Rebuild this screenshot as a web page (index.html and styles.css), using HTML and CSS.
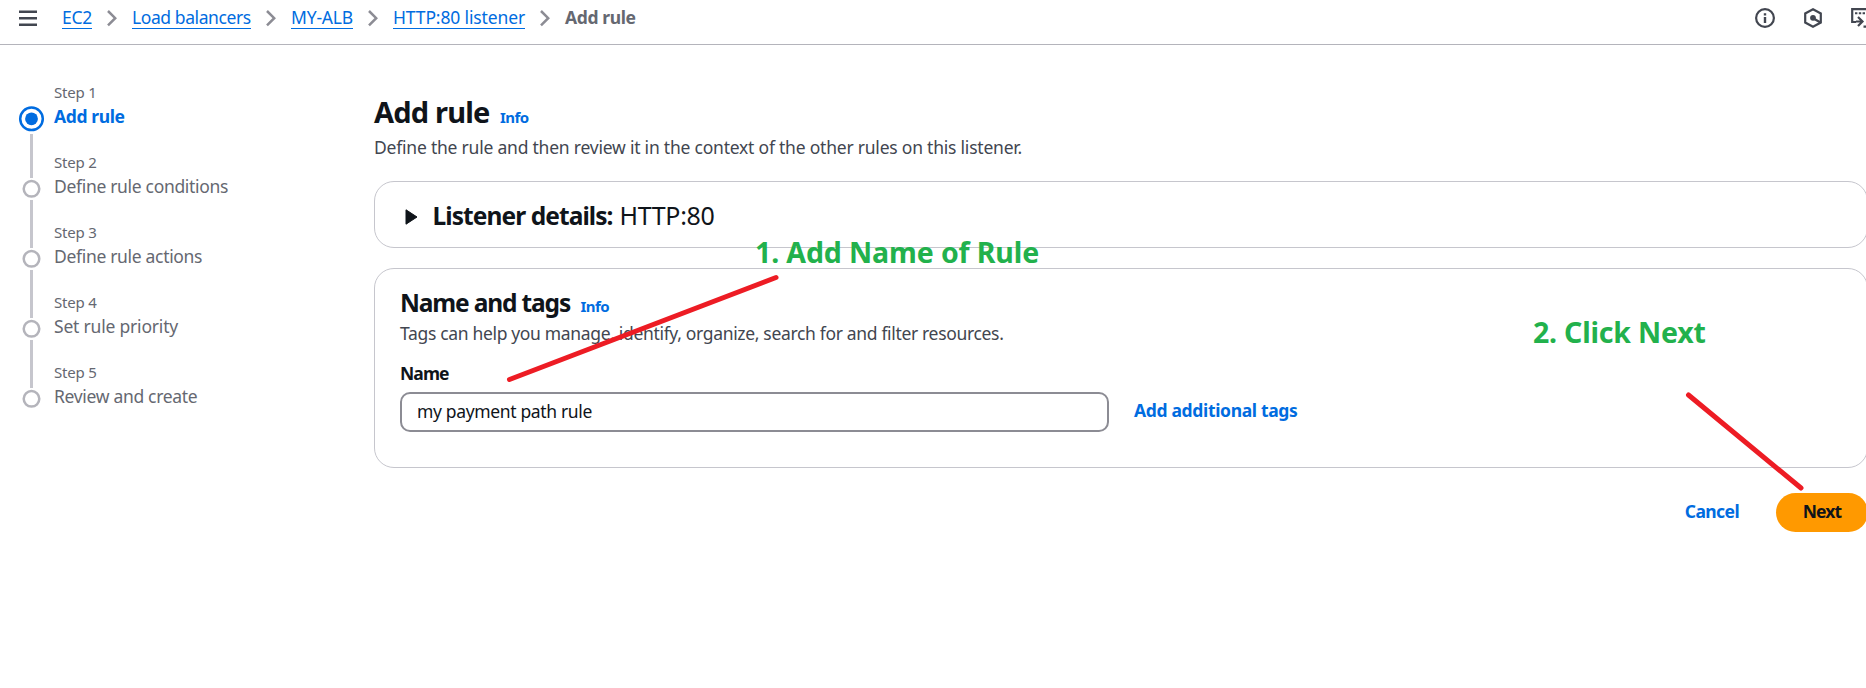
FILE: index.html
```
<!DOCTYPE html>
<html lang="en">
<head>
<meta charset="utf-8">
<title>Add rule</title>
<link rel="stylesheet" href="styles.css">
</head>
<body>
<header class="topbar">
  <svg class="menu-icon" width="18" height="17" viewBox="0 0 18 17"><path d="M0 1.7h18M0 8.2h18M0 14.7h18"/></svg>
  <nav class="crumbs">
    <a class="crumb crumb-ec2">EC2</a>
    <svg class="sep" width="10" height="17" viewBox="0 0 10 17"><path d="M1 1l7.2 7.2L1 15.4"/></svg>
    <a class="crumb crumb-lb">Load balancers</a>
    <svg class="sep" width="10" height="17" viewBox="0 0 10 17"><path d="M1 1l7.2 7.2L1 15.4"/></svg>
    <a class="crumb crumb-alb">MY-ALB</a>
    <svg class="sep" width="10" height="17" viewBox="0 0 10 17"><path d="M1 1l7.2 7.2L1 15.4"/></svg>
    <a class="crumb crumb-listener">HTTP:80 listener</a>
    <svg class="sep" width="10" height="17" viewBox="0 0 10 17"><path d="M1 1l7.2 7.2L1 15.4"/></svg>
    <span class="crumb-current">Add rule</span>
  </nav>
  <div class="tools">
    <svg width="20" height="20" viewBox="0 0 20 20"><circle cx="10" cy="10" r="8.9" class="stroke"/><path class="solid" d="M8.8 5.2h2.4v2.2H8.8zM8.8 9h2.4v6H8.8z"/></svg>
    <svg width="18" height="20" viewBox="0 0 18 20"><path class="stroke" d="M9 1.2l7.8 4.3v9L9 18.8l-7.8-4.3v-9z"/><circle class="solid" cx="9" cy="9.8" r="2.9"/><path class="stroke" d="M9.5 10.5l7 4"/></svg>
    <svg width="20" height="20" viewBox="0 0 20 20"><path class="stroke" d="M5 14H1.2V1.2H20"/><path class="dots" d="M4 5.2h2.4M7.8 5.2h2.4M11.6 5.2H14"/><path class="stroke" d="M5 13.5h6M7 9l4.5 4.5L7 18M12.5 18.7H20"/></svg>
  </div>
</header>

<div class="page">
  <ol class="steps">
    <li class="step active">
      <svg class="marker" width="26" height="70" viewBox="0 0 26 70"><circle class="ring" cx="12.5" cy="36.8" r="11.3"/><circle class="dot" cx="12.5" cy="36.8" r="6.4"/><path d="M12.5 52v44"/></svg>
      <div><div class="num">Step 1</div><div class="label">Add rule</div></div>
    </li>
    <li class="step">
      <svg class="marker" width="26" height="70" viewBox="0 0 26 70"><circle class="ring" cx="12.5" cy="36.8" r="7.8"/><path d="M12.5 48v48"/></svg>
      <div><div class="num">Step 2</div><div class="label">Define rule conditions</div></div>
    </li>
    <li class="step">
      <svg class="marker" width="26" height="70" viewBox="0 0 26 70"><circle class="ring" cx="12.5" cy="36.8" r="7.8"/><path d="M12.5 48v48"/></svg>
      <div><div class="num">Step 3</div><div class="label">Define rule actions</div></div>
    </li>
    <li class="step">
      <svg class="marker" width="26" height="70" viewBox="0 0 26 70"><circle class="ring" cx="12.5" cy="36.8" r="7.8"/><path d="M12.5 48v48"/></svg>
      <div><div class="num">Step 4</div><div class="label priority">Set rule priority</div></div>
    </li>
    <li class="step">
      <svg class="marker" width="26" height="70" viewBox="0 0 26 70"><circle class="ring" cx="12.5" cy="36.8" r="7.8"/></svg>
      <div><div class="num">Step 5</div><div class="label">Review and create</div></div>
    </li>
  </ol>

  <main class="content">
    <div class="title-row"><h1>Add rule</h1><a class="info">Info</a></div>
    <p class="lead">Define the rule and then review it in the context of the other rules on this listener.</p>

    <section class="card details">
      <svg class="caret" width="13" height="16" viewBox="0 0 13 16"><path d="M1 .8v14.4L12 8z"/></svg>
      <h2>Listener details:</h2><span class="protocol">HTTP:80</span>
    </section>

    <section class="card tags">
      <div class="title-row"><h2 class="tags-title">Name and tags</h2><a class="info">Info</a></div>
      <p class="hint">Tags can help you manage, identify, organize, search for and filter resources.</p>
      <label class="field-label" for="name">Name</label>
      <div class="field-row">
        <input id="name" class="field" type="text" value="my payment path rule">
        <a class="add-tags">Add additional tags</a>
      </div>
    </section>

    <div class="actions"><a class="cancel">Cancel</a><button class="next">Next</button></div>
  </main>
</div>

<svg class="pointers" width="1866" height="688" viewBox="0 0 1866 688"><path d="M509.5 379.5L776 277.5M1688.5 395L1801 488"/></svg>
<div class="note note-name">1. Add Name of Rule</div>
<div class="note note-next">2. Click Next</div>
</body>
</html>
```
FILE: styles.css
```
* { box-sizing: border-box; }
html, body { height: 100%; overflow: hidden; }
body {
  margin: 0;
  background: #fff;
  color: #0f141a;
  font: 17.5px/25px "Noto Sans", "Open Sans", sans-serif;
  letter-spacing: -0.32px;
}
h1, h2, p, ol { margin: 0; padding: 0; }
svg { display: block; flex: none; overflow: visible; fill: none; }

.topbar {
  display: flex;
  height: 45px;
  padding-left: 19px;
  border-bottom: 1px solid #b4b4bb;
  overflow: hidden;
}
.menu-icon { margin: 10px 25px 0 0; stroke: #424650; stroke-width: 2.4; }
.crumbs { display: flex; align-items: flex-start; padding-top: 5px; white-space: nowrap; }
.crumb { height: 24px; color: #006ce0; border-bottom: 1px solid #006ce0; }
.crumb-ec2 { width: 30px; }
.crumb-lb { width: 119px; letter-spacing: -0.41px; }
.crumb-alb { width: 62px; letter-spacing: -0.19px; }
.crumb-listener { width: 132px; letter-spacing: -0.13px; }
.sep { margin: 5px 15px 0; stroke: #8c8c94; stroke-width: 2.5; }
.crumb-current { color: #656871; font-weight: 700; letter-spacing: -0.39px; }
.tools { display: flex; gap: 29px; margin-left: auto; margin-right: -5px; padding-top: 8px; }
.stroke { stroke: #424650; stroke-width: 2.2; }
.solid { fill: #424650; }
.dots { stroke: #424650; stroke-width: 2; }

.page { display: flex; }
.steps { flex: none; width: 374px; padding: 37px 0 0 19px; list-style: none; }
.step { display: flex; gap: 9px; height: 70px; color: #656871; }
.marker { stroke: #c6c6cd; stroke-width: 3; }
.marker .ring { stroke: #b4b4bb; stroke-width: 2.5; }
.num { font-size: 15px; line-height: 20px; margin-bottom: 2px; letter-spacing: -0.22px; }
.priority { letter-spacing: -0.2px; }
.active .label { color: #006ce0; font-weight: 700; letter-spacing: -0.39px; }
.active .marker .ring { stroke: #006ce0; }
.active .marker .dot { fill: #006ce0; stroke: none; }

.content { flex: none; width: 1494px; padding-top: 49px; }
.title-row { display: flex; align-items: baseline; }
h1 { font-size: 29px; line-height: 36px; font-weight: 700; letter-spacing: -0.8px; width: 126px; white-space: nowrap; }
h2 { font-size: 24.5px; line-height: 30px; font-weight: 700; letter-spacing: -0.92px; white-space: nowrap; }
.info { color: #006ce0; font-size: 15px; line-height: 20px; font-weight: 700; letter-spacing: -0.56px; }
.lead { margin-top: 5px; color: #424650; letter-spacing: -0.219px; }

.card { border: 1px solid #c6c6cd; border-radius: 20px; }
.details { display: flex; align-items: baseline; height: 67px; margin-top: 21px; padding: 18px 0 0 30px; }
.caret { align-self: flex-start; margin: 9px 14.5px 0 0; fill: #0f141a; stroke: #0f141a; stroke-width: 1; stroke-linejoin: round; }
.details h2 { width: 187px; }
.protocol { font-size: 25px; line-height: 30px; letter-spacing: -0.32px; }

.tags { height: 200px; margin-top: 20px; padding: 19px 0 0 25px; }
.tags-title { width: 180.5px; letter-spacing: -1.15px; }
.hint { margin-top: 3px; color: #424650; letter-spacing: -0.333px; }
.field-label { display: block; margin-top: 15px; font-weight: 700; letter-spacing: -0.9px; }
.field-row { display: flex; gap: 25px; margin-top: 6px; }
.field {
  width: 709px;
  height: 40px;
  padding: 0 15px 2px;
  border: 2px solid #8c8c94;
  border-radius: 10px;
  color: #0f141a;
  font: inherit;
  letter-spacing: -0.348px;
  outline: none;
}
.add-tags { padding-top: 6px; color: #006ce0; font-weight: 700; letter-spacing: -0.339px; }

.actions { display: flex; justify-content: flex-end; align-items: center; gap: 37px; margin-top: 25px; }
.cancel { padding-bottom: 2px; color: #006ce0; font-weight: 700; letter-spacing: -0.6px; }
.next {
  width: 92px;
  height: 39px;
  padding: 0 0 2px;
  border: 0;
  border-radius: 20px;
  background: #ff9900;
  color: #0f141a;
  font: inherit;
  font-weight: 700;
  letter-spacing: -0.9px;
}

/* Annotations drawn over the page */
.pointers { position: absolute; left: 0; top: 0; stroke: #ed1c24; stroke-width: 5; stroke-linecap: round; pointer-events: none; }
.note { position: absolute; color: #22b14c; font-size: 28.5px; line-height: 36px; font-weight: 700; white-space: nowrap; }
.note-name { left: 755px; top: 234px; letter-spacing: -0.12px; }
.note-next { left: 1533px; top: 314px; letter-spacing: -0.2px; }
```
